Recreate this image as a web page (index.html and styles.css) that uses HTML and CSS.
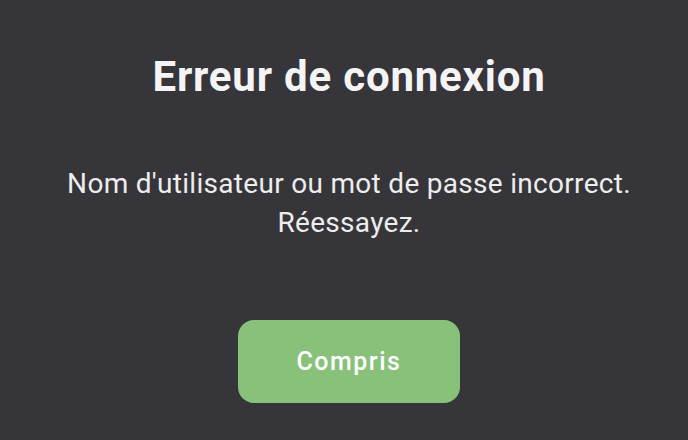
FILE: index.html
```html
<!DOCTYPE html>
<html lang="fr">
<head>
  <meta charset="UTF-8" />
  <meta name="viewport" content="width=device-width, initial-scale=1" />
  <title>Erreur de connexion</title>
  <link rel="stylesheet" href="styles.css">
</head>
<body>
  <div class="dialog">
    <h1>Erreur de connexion</h1>
    <p>Nom d'utilisateur ou mot de passe incorrect.<br>Réessayez.</p>
    <button type="button">Compris</button>
  </div>
</body>
</html>
```

FILE: styles.css
```css
body {
  margin: 0;
  font-family: Roboto, 'Noto Sans', sans-serif;
  background-color: #36353a;
  height: 100vh;
}
.dialog {
  height: 440px;
  box-sizing: border-box;
  padding-left: 10px;
  display: flex;
  flex-direction: column;
  align-items: center;
  background-color: #36353a;
  color: #f4f4f5;
}
h1 {
  margin: 53px 0 0;
  font-size: 42px;
  line-height: 48px;
  font-weight: 700;
  letter-spacing: 0.8px;
}
p {
  margin: 63px 0 0;
  font-size: 28px;
  line-height: 39px;
  letter-spacing: 0.3px;
  text-align: center;
  color: #ededee;
}
button {
  margin-top: 78px;
  width: 222px;
  height: 83px;
  background-color: #88c27a;
  color: white;
  border: none;
  border-radius: 16px;
  font-family: inherit;
  font-size: 25px;
  font-weight: 500;
  letter-spacing: 1.5px;
  cursor: pointer;
}
```
